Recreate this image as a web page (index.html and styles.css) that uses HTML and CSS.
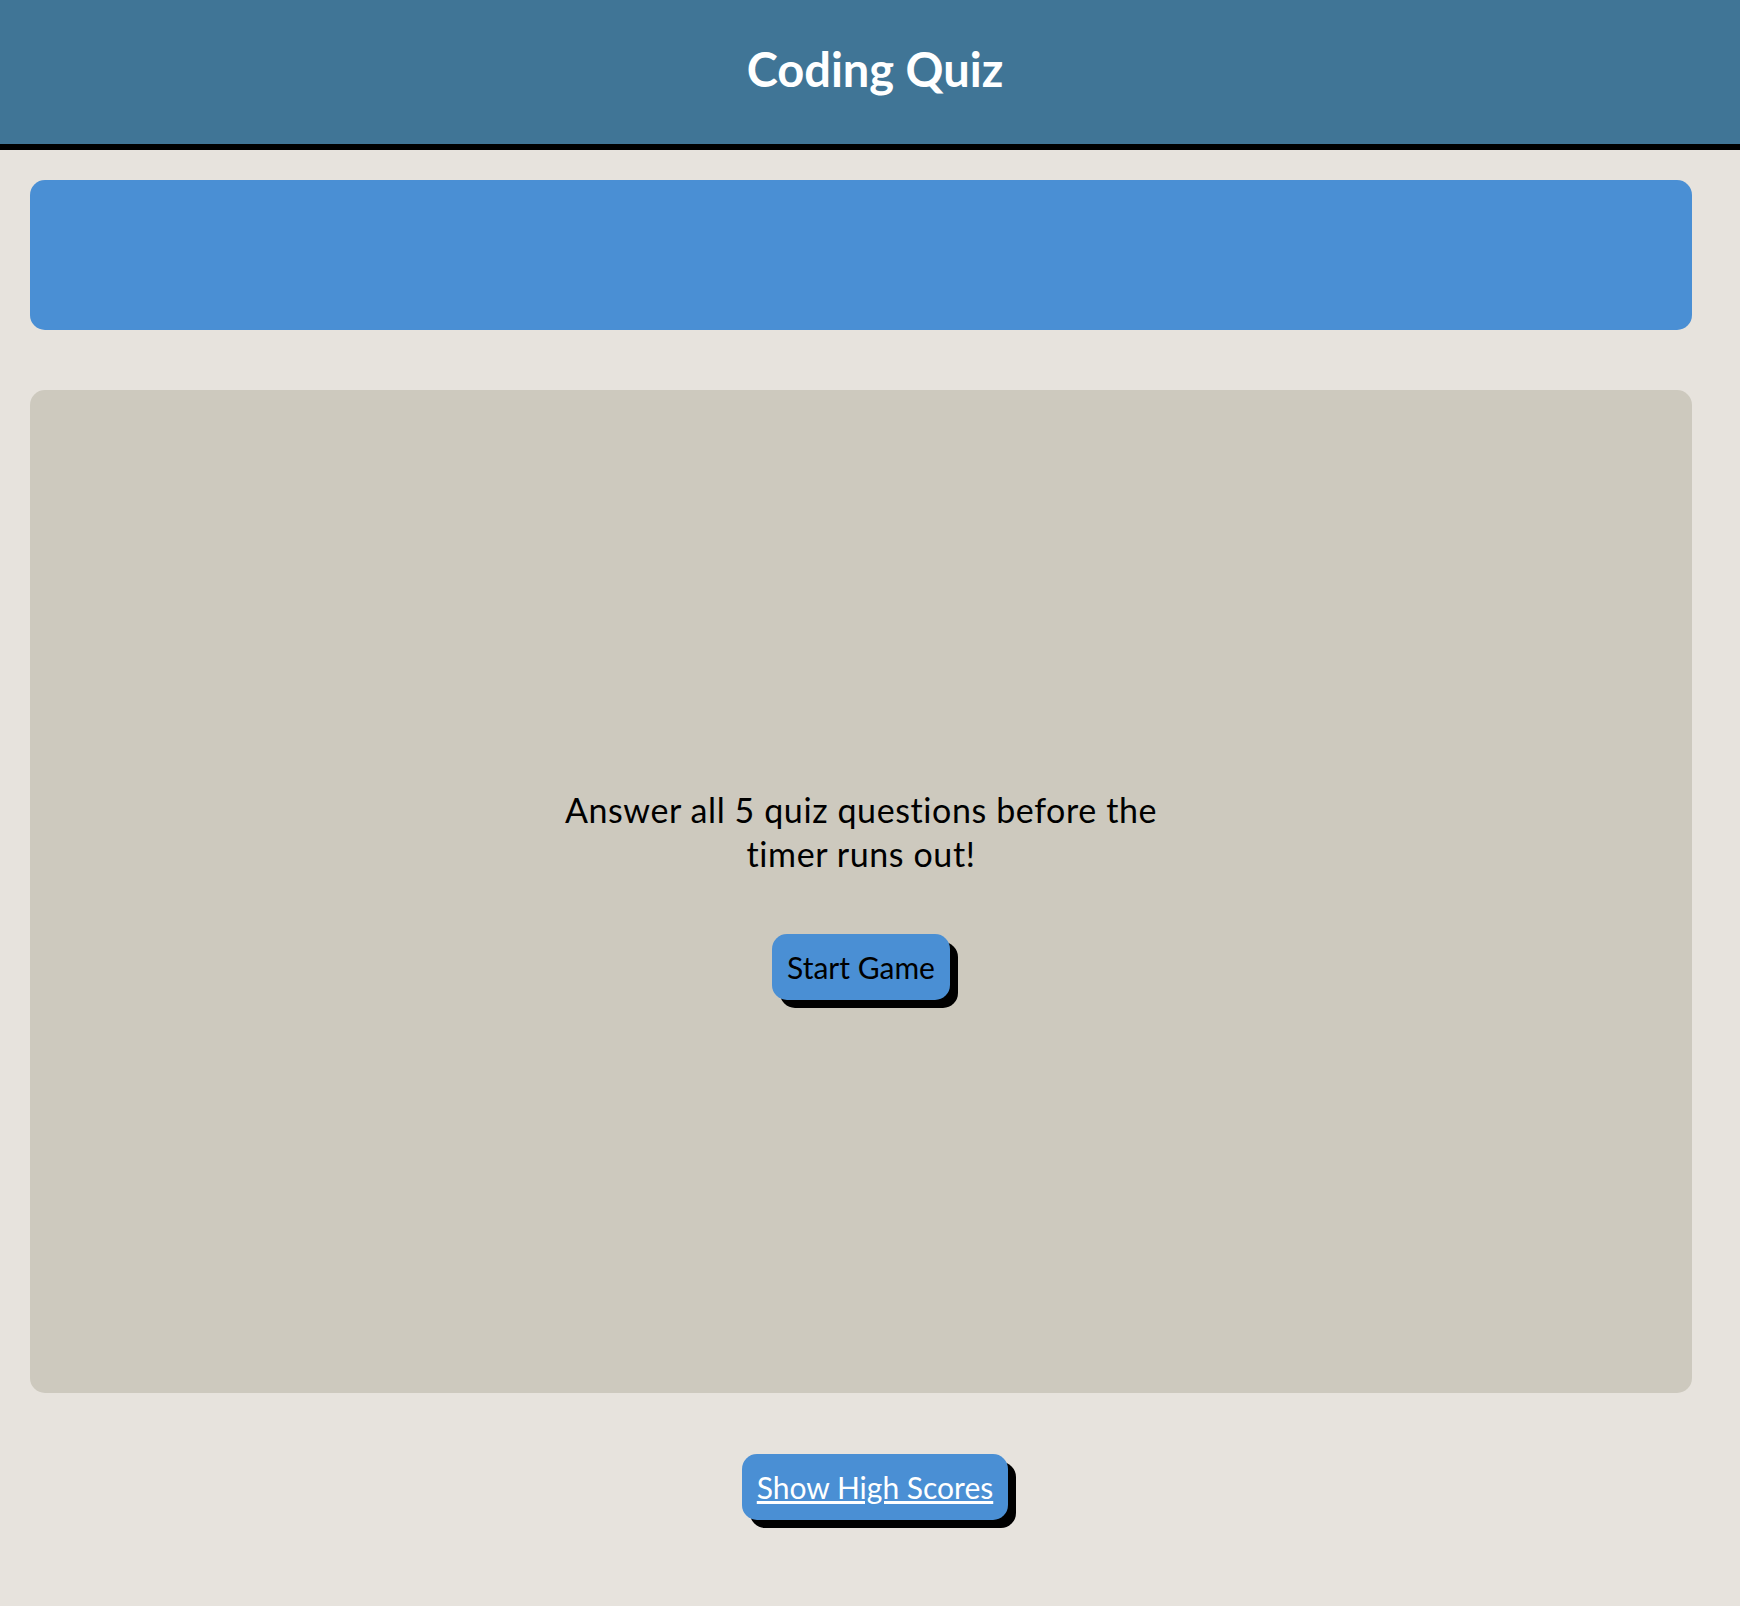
FILE: index.html
```html
<!DOCTYPE html>
<html lang="en">
<head>
<meta charset="utf-8">
<title>Coding Quiz</title>
<link rel="stylesheet" href="styles.css">
</head>
<body>
<header class="site-header">
  <h1 class="title">Coding Quiz</h1>
</header>
<main class="main">
  <section class="timer-bar"></section>
  <section class="quiz-card">
    <p class="intro">Answer all 5 quiz questions before the timer runs out!</p>
    <button class="btn">Start Game</button>
  </section>
  <footer class="footer">
    <button class="btn btn-link"><a href="#">Show High Scores</a></button>
  </footer>
</main>
</body>
</html>
```

FILE: styles.css
```css
* { box-sizing: border-box; }
html, body {
  margin: 0;
  padding: 0;
  background: #e7e3dd;
  font-family: Lato, "Open Sans", sans-serif;
}
.site-header {
  height: 150px;
  background: #407596;
  border-bottom: 6px solid #000;
  display: flex;
  align-items: center;
  justify-content: center;
  padding: 0 0 5px 10px;
}
.title {
  margin: 0;
  color: #fff;
  font-size: 47px;
  font-weight: 700;
  line-height: 1.2;
}
.main {
  padding: 30px 48px 0 30px;
  display: flex;
  flex-direction: column;
}
.timer-bar {
  height: 150px;
  background: #4a8fd4;
  border-radius: 15px;
}
.quiz-card {
  margin-top: 60px;
  height: 1003px;
  background: #cdc9be;
  border-radius: 15px;
  display: flex;
  flex-direction: column;
  align-items: center;
  justify-content: center;
}
.intro {
  margin: 5px 0 58px;
  width: 640px;
  text-align: center;
  font-size: 34px;
  letter-spacing: 0.6px;
  font-variant-ligatures: none;
  line-height: 44px;
  color: #000;
}
.btn {
  font-family: Lato, "Open Sans", sans-serif;
  font-size: 30px;
  line-height: 36px;
  padding: 15px 15px;
  background: #4a8fd4;
  color: #000;
  border: none;
  border-radius: 15px;
  box-shadow: 8px 8px 0 #000;
}
.footer {
  display: flex;
  justify-content: center;
  padding: 61px 0 40px 28px;
}
.btn-link a {
  color: #fff;
  text-decoration: underline;
}
```
